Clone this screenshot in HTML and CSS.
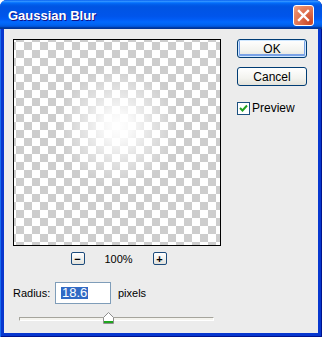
FILE: index.html
```html
<!DOCTYPE html>
<html lang="en">
<head>
  <meta charset="UTF-8" />
  <title>Gaussian Blur</title>
  <link rel="stylesheet" href="styles.css">
</head>
<body>

  <div class="window">
    <div class="titlebar">
      <span class="title">Gaussian Blur</span>
      <button class="close" aria-label="Close">
        <svg width="13" height="13" viewBox="0 0 13 13">
          <path d="M2 2 L11 11 M11 2 L2 11" stroke="#fff" stroke-width="2.4" stroke-linecap="square"/>
        </svg>
      </button>
    </div>

    <div class="client">
      <div class="main">
        <div class="preview"></div>

        <div class="zoom">
          <button class="zoom-btn">&minus;</button>
          <span class="zoom-value">100%</span>
          <button class="zoom-btn">+</button>
        </div>

        <div class="radius">
          <label for="radius">Radius:</label>
          <div class="field" id="radius"><span class="sel">18.6</span></div>
          <span>pixels</span>
        </div>

        <div class="slider">
          <div class="track"></div>
          <svg class="thumb" width="11" height="12" viewBox="0 0 11 12">
            <path d="M0.5 5.5 L5.5 0.5 L10.5 5.5 L10.5 11.5 L0.5 11.5 Z" fill="#fff" stroke="#8e8e8e"/>
            <rect x="1" y="9" width="9" height="2" fill="#1fa51f"/>
          </svg>
        </div>
      </div>

      <div class="side">
        <button class="btn default">OK</button>
        <button class="btn">Cancel</button>
        <div class="check">
          <span class="box">
            <svg width="11" height="11" viewBox="0 0 11 11">
              <path d="M2 5 L4.5 7.5 L9 2.5" fill="none" stroke="#21a121" stroke-width="2"/>
            </svg>
          </span>
          <span>Preview</span>
        </div>
      </div>
    </div>
  </div>

</body>
</html>
```

FILE: styles.css
```css
* { box-sizing: border-box; }
body {
  margin: 0; padding: 0;
  background: #fff;
  font-family: 'Liberation Sans', Arial, sans-serif;
  font-size: 11px; color: #000;
}
.window {
  width: 322px; height: 337px;
  background: #0737cf;
  border-radius: 7px 7px 0 0;
  overflow: hidden;
  box-shadow: inset 1px 0 0 #1a6cf0, inset -1px 0 0 #00138c, inset 0 -1px 0 #00138c;
}
.titlebar {
  height: 29px;
  display: flex; align-items: center;
  justify-content: space-between;
  padding: 0 8px 0 8px;
  background: linear-gradient(#0058ee 0%, #3593ff 4%, #288eff 6%, #127dff 8%, #036ffc 10%, #0262ee 14%, #0057e5 20%, #0054e3 24%, #0055eb 56%, #005bf5 66%, #026afe 76%, #0062ef 86%, #0052d6 92%, #0040ab 94%, #003092 100%);
}
.title {
  color: #fff; font-weight: bold; font-size: 13px;
  text-shadow: 1px 1px 0 #0f1089;
  padding-top: 1px;
}
.close {
  width: 21px; height: 21px;
  margin-right: 0; margin-top: 1px;
  padding: 0; border: 1px solid #fff;
  border-radius: 3px;
  background: radial-gradient(circle at 85% 85%, #cc4625 0%, #dc6a49 40%, #e7825f 70%, #f0a48a 100%);
  display: flex; align-items: center; justify-content: center;
}
.client {
  height: 304px;
  margin: 0 4px;
  background: #ececec;
  display: flex;
}
.main {
  padding: 10px 0 0 9px;
  display: flex; flex-direction: column;
}
.preview {
  width: 208px; height: 207px;
  border: 1px solid #000;
  background:
    radial-gradient(circle at 104px 86px, #fff 0, rgba(255,255,255,0.85) 14px, rgba(255,255,255,0.45) 34px, rgba(255,255,255,0) 60px),
    repeating-conic-gradient(#cdcdcd 0 25%, #fff 0 50%) 2px 2px / 16px 16px;
}
.zoom {
  margin-top: 6px; height: 13px;
  display: flex; align-items: center; justify-content: center;
  gap: 20px; padding-left: 3px;
}
.zoom-value { width: 28px; }
.zoom-btn {
  width: 14px; height: 13px; padding: 0;
  border: 1px solid #1c4b7c; border-radius: 2px;
  background: linear-gradient(#fff, #e3e2dc);
  font-family: 'Liberation Sans', Arial, sans-serif;
  font-size: 11px; font-weight: bold; line-height: 10px;
  color: #000;
}
.radius {
  margin-top: 17px;
  display: flex; align-items: center;
}
.radius label { width: 42px; }
.field {
  width: 56px; height: 22px;
  border: 1px solid #7f9db9; background: #fff;
  padding: 4px 0 0 5px;
  margin-right: 7px;
}
.sel {
  display: inline-block;
  background: #316ac5; color: #fff;
  padding: 0 1px; line-height: 12px;
  font-size: 13px;
}
.slider {
  margin: 8px 0 0 6px;
  width: 195px; height: 12px;
  position: relative;
}
.track {
  position: absolute; left: 0; right: 0; top: 5px; height: 4px;
  border: 1px solid #a5a49c; border-bottom-color: #fff; border-right-color: #fff;
  background: #f4f3ee;
}
.thumb { position: absolute; left: 84px; top: 0; }
.side {
  padding: 10px 0 0 16px;
  display: flex; flex-direction: column;
}
.btn {
  width: 70px; height: 19px;
  margin-bottom: 9px; padding: 0;
  border: 1px solid #003c74; border-radius: 3px;
  background: linear-gradient(#fff, #f3f3ef 60%, #e3e2da);
  font-family: 'Liberation Sans', Arial, sans-serif;
  font-size: 12px; color: #000;
}
.btn.default {
  box-shadow: inset 0 0 0 1px #cee7ff, inset 0 -1px 0 2px #7aa2e6;
}
.check {
  margin-top: 6px;
  display: flex; align-items: center; gap: 2px;
  font-size: 12px;
}
.box {
  width: 13px; height: 13px;
  border: 1px solid #1c5180; background: #fff;
  display: flex; align-items: center; justify-content: center;
}
```
